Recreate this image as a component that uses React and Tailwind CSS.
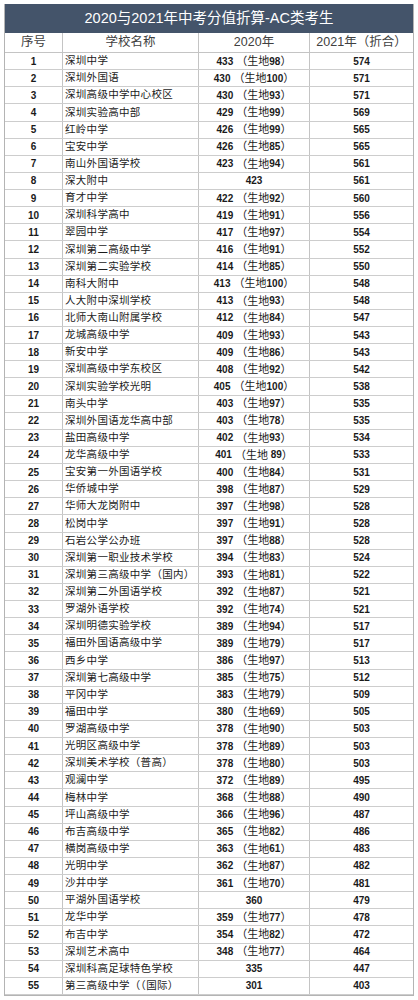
import React from 'react';

const rows = [
  ['深圳中学', '433', '98', '574'],
  ['深圳外国语', '430', '100', '571'],
  ['深圳高级中学中心校区', '430', '93', '571'],
  ['深圳实验高中部', '429', '99', '569'],
  ['红岭中学', '426', '99', '565'],
  ['宝安中学', '426', '85', '565'],
  ['南山外国语学校', '423', '94', '561'],
  ['深大附中', '423', null, '561'],
  ['育才中学', '422', '92', '560'],
  ['深圳科学高中', '419', '91', '556'],
  ['翠园中学', '417', '97', '554'],
  ['深圳第二高级中学', '416', '91', '552'],
  ['深圳第二实验学校', '414', '85', '550'],
  ['南科大附中', '413', '100', '548'],
  ['人大附中深圳学校', '413', '93', '548'],
  ['北师大南山附属学校', '412', '84', '547'],
  ['龙城高级中学', '409', '93', '543'],
  ['新安中学', '409', '86', '543'],
  ['深圳高级中学东校区', '408', '92', '542'],
  ['深圳实验学校光明', '405', '100', '538'],
  ['南头中学', '403', '97', '535'],
  ['深圳外国语龙华高中部', '403', '78', '535'],
  ['盐田高级中学', '402', '93', '534'],
  ['龙华高级中学', '401', ' 89', '533'],
  ['宝安第一外国语学校', '400', '84', '531'],
  ['华侨城中学', '398', '87', '529'],
  ['华师大龙岗附中', '397', '98', '528'],
  ['松岗中学', '397', '91', '528'],
  ['石岩公学公办班', '397', '88', '528'],
  ['深圳第一职业技术学校', '394', '83', '524'],
  ['深圳第三高级中学（国内）', '393', '81', '522'],
  ['深圳第二外国语学校', '392', '87', '521'],
  ['罗湖外语学校', '392', '74', '521'],
  ['深圳明德实验学校', '389', '94', '517'],
  ['福田外国语高级中学', '389', '79', '517'],
  ['西乡中学', '386', '97', '513'],
  ['深圳第七高级中学', '385', '75', '512'],
  ['平冈中学', '383', '79', '509'],
  ['福田中学', '380', '69', '505'],
  ['罗湖高级中学', '378', '90', '503'],
  ['光明区高级中学', '378', '89', '503'],
  ['深圳美术学校（普高）', '378', '80', '503'],
  ['观澜中学', '372', '89', '495'],
  ['梅林中学', '368', '88', '490'],
  ['坪山高级中学', '366', '96', '487'],
  ['布吉高级中学', '365', '82', '486'],
  ['横岗高级中学', '363', '61', '483'],
  ['光明中学', '362', '87', '482'],
  ['沙井中学', '361', '70', '481'],
  ['平湖外国语学校', '360', null, '479'],
  ['龙华中学', '359', '77', '478'],
  ['布吉中学', '354', '82', '472'],
  ['深圳艺术高中', '348', '77', '464'],
  ['深圳科高足球特色学校', '335', null, '447'],
  ['第三高级中学（（国际）', '301', null, '403'],
];

const font = { fontFamily: '"Liberation Sans", "Noto Sans CJK SC", sans-serif' };

export default function App() {
  return (
    <div className="w-[418px] h-[1000px] bg-white pt-[4px] px-[4px]" style={font}>
      <div className="border-l border-r border-b border-[#b4b4b4]">
        {/* title */}
        <div className="h-[29px] bg-[#44546a] flex items-center justify-center text-white text-[14.5px]">
          2020与2021年中考分值折算-AC类考生
        </div>

        {/* header */}
        <div className="h-[20px] flex border-b border-[#c4c4c4] text-[12.5px] text-[#404040]">
          <div className="w-[58px] flex items-center justify-center border-r border-[#c4c4c4]">序号</div>
          <div className="w-[136px] flex items-center justify-center border-r border-[#c4c4c4]">学校名称</div>
          <div className="w-[111px] flex items-center justify-center border-r border-[#c4c4c4]">2020年</div>
          <div className="flex-1 flex items-center justify-center">2021年（折合）</div>
        </div>

        {rows.map(([name, score, bio, score21], i) => (
          <div key={i} className="h-[17.14px] flex border-b border-[#cdcdcd] text-[#1a1a1a]">
            <div className="w-[58px] flex items-center justify-center border-r border-[#c4c4c4] text-[10px] font-bold">
              {i + 1}
            </div>
            <div className="w-[136px] flex items-center pl-[2px] border-r border-[#c4c4c4] text-[10.5px] tracking-[0.3px] whitespace-nowrap overflow-hidden">
              {name}
            </div>
            <div className="w-[111px] flex items-center justify-center border-r border-[#c4c4c4] text-[10px] whitespace-pre">
              <span className="font-bold">{score}</span>
              {bio !== null && (
                <>
                  <span className="text-[11px]"> （生地</span>
                  <span className="font-bold">{bio}</span>
                  <span className="text-[11px]">）</span>
                </>
              )}
            </div>
            <div className="flex-1 flex items-center justify-center text-[10px] font-bold">{score21}</div>
          </div>
        ))}
      </div>
    </div>
  );
}
